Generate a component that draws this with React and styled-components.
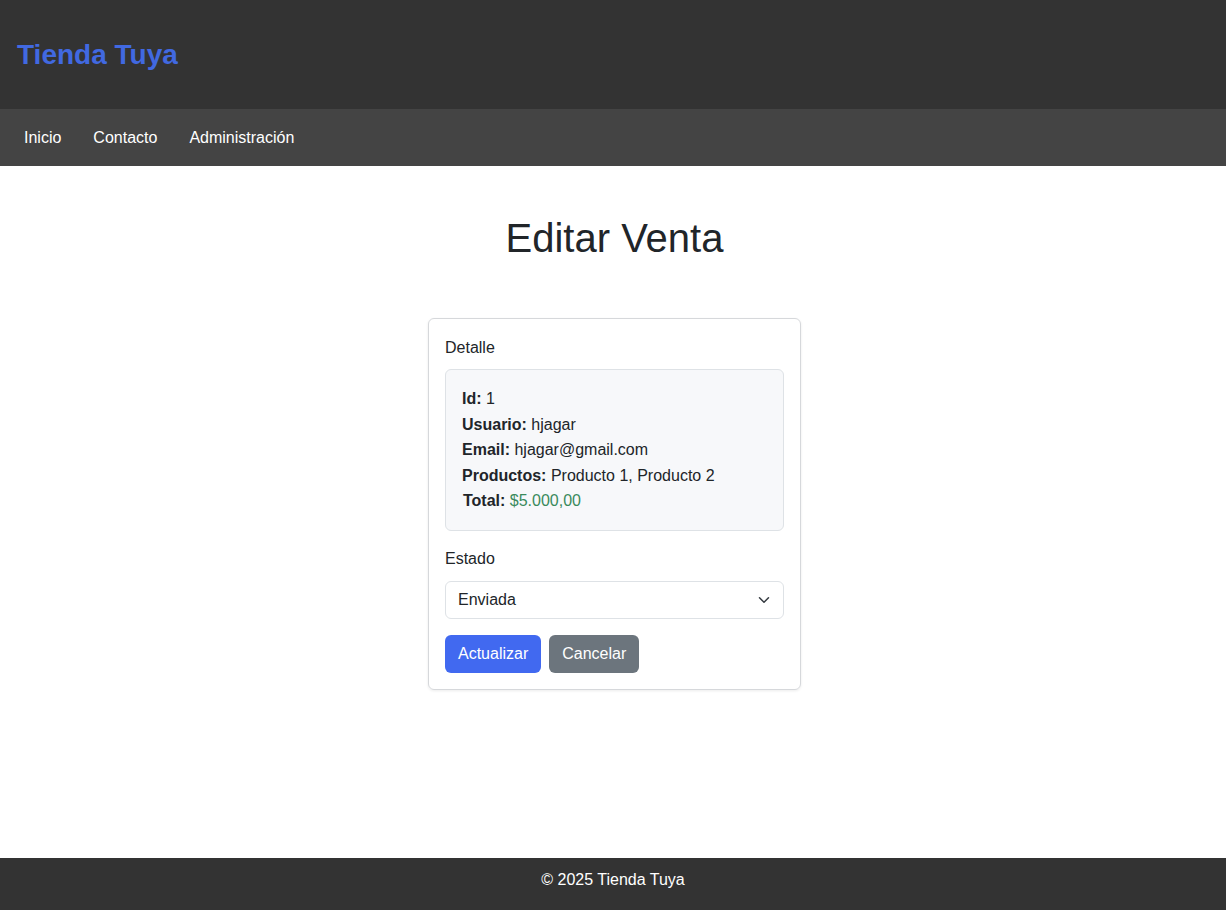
import React from 'react';
import styled, { createGlobalStyle } from 'styled-components';

const GlobalStyle = createGlobalStyle`
  * { box-sizing: border-box; }
  body {
    margin: 0;
    font-family: "Liberation Sans", Arial, sans-serif;
    font-size: 16px;
    color: #212529;
    background: #fff;
  }
`;

const Page = styled.div`
  display: flex;
  flex-direction: column;
  min-height: 100vh;
`;

const Header = styled.header`
  background: #333;
  height: 109px;
  display: flex;
  align-items: center;
  padding: 0 17px;
`;

const Logo = styled.h1`
  margin: 0;
  font-size: 28px;
  font-weight: bold;
  color: #4169e1;
`;

const Nav = styled.nav`
  background: #444;
  height: 57px;
  display: flex;
  align-items: center;
  padding: 0 8px;
`;

const NavLink = styled.a`
  color: #fff;
  text-decoration: none;
  padding: 8px 16px;
  font-size: 16px;
`;

const Main = styled.main`
  flex: 1;
  display: flex;
  flex-direction: column;
  align-items: center;
  padding: 48px 0 0 3px;
`;

const Title = styled.h2`
  margin: 0 0 56px;
  font-size: 40px;
  font-weight: normal;
  line-height: 48px;
  color: #212529;
`;

const Card = styled.form`
  width: 373px;
  border: 1px solid #d6d8db;
  border-radius: 6px;
  box-shadow: 0 1px 3px rgba(0, 0, 0, 0.08);
  padding: 16px;
  display: flex;
  flex-direction: column;
`;

const Label = styled.label`
  display: block;
  font-size: 16px;
  line-height: 24px;
  margin: ${p => (p.$first ? '1px 0 9px' : '0 0 10px')};
`;

const InfoBox = styled.div`
  background: #f7f8fa;
  border: 1px solid #dee2e6;
  border-radius: 6px;
  padding: 16px;
  margin-bottom: 16px;
`;

const InfoLine = styled.div`
  line-height: 25.6px;
  font-size: 16px;
  padding-left: ${p => (p.$indent ? '1px' : '0')};
  & strong { font-weight: bold; }
`;

const Value = styled.span`
  color: ${p => p.$color || '#212529'};
`;

const SelectWrap = styled.div`
  position: relative;
  margin-bottom: 16px;
`;

const Select = styled.select`
  width: 100%;
  height: 38px;
  appearance: none;
  border: 1px solid #dee2e6;
  border-radius: 6px;
  background: #fff;
  padding: 0 36px 0 12px;
  font-family: inherit;
  font-size: 16px;
  color: #212529;
`;

const Chevron = styled.svg`
  position: absolute;
  right: 14px;
  top: 13px;
  pointer-events: none;
`;

const Actions = styled.div`
  display: flex;
  gap: 8px;
`;

const Button = styled.button`
  height: 38px;
  padding: 0 13px;
  border: none;
  border-radius: 6px;
  font-family: inherit;
  font-size: 16px;
  color: #fff;
  background: ${p => (p.$secondary ? '#6c757d' : '#4169f0')};
  cursor: pointer;
`;

const Footer = styled.footer`
  background: #333;
  color: #fff;
  height: 52px;
  padding-top: 10px;
  text-align: center;
  font-size: 16px;
  line-height: 24px;
`;

export default function App() {
  return (
    <Page>
      <GlobalStyle />
      <Header>
        <Logo>Tienda Tuya</Logo>
      </Header>
      <Nav>
        <NavLink href="#">Inicio</NavLink>
        <NavLink href="#">Contacto</NavLink>
        <NavLink href="#">Administración</NavLink>
      </Nav>
      <Main>
        <Title>Editar Venta</Title>
        <Card onSubmit={e => e.preventDefault()}>
          <Label as="div" $first>Detalle</Label>
          <InfoBox>
            <InfoLine><strong>Id:</strong> <Value>1</Value></InfoLine>
            <InfoLine><strong>Usuario:</strong> <Value>hjagar</Value></InfoLine>
            <InfoLine><strong>Email:</strong> <Value>hjagar@gmail.com</Value></InfoLine>
            <InfoLine><strong>Productos:</strong> <Value>Producto 1, Producto 2</Value></InfoLine>
            <InfoLine $indent><strong>Total:</strong> <Value $color="#3a8a5c">$5.000,00</Value></InfoLine>
          </InfoBox>
          <Label htmlFor="estado">Estado</Label>
          <SelectWrap>
            <Select id="estado" defaultValue="Enviada">
              <option>Pendiente</option>
              <option>Enviada</option>
              <option>Entregada</option>
              <option>Cancelada</option>
            </Select>
            <Chevron width="12" height="12" viewBox="0 0 16 16">
              <path d="M2 5l6 6 6-6" fill="none" stroke="#343a40" strokeWidth="2" strokeLinecap="round" strokeLinejoin="round" />
            </Chevron>
          </SelectWrap>
          <Actions>
            <Button type="submit">Actualizar</Button>
            <Button type="button" $secondary>Cancelar</Button>
          </Actions>
        </Card>
      </Main>
      <Footer>© 2025 Tienda Tuya</Footer>
    </Page>
  );
}
